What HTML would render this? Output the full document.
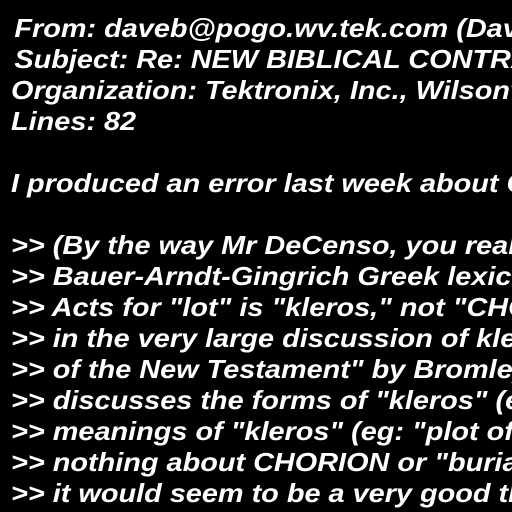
<!DOCTYPE html>
<html><head><style>
html,body{margin:0;padding:0;background:#000;width:512px;height:512px;overflow:hidden}
pre{margin:0;position:absolute;top:13px;left:11px;font-family:"Liberation Sans",sans-serif;font-weight:bold;font-style:italic;font-size:26px;line-height:31px;color:#fff;white-space:pre;transform:scaleX(1.11);transform-origin:0 0}
.i{padding-left:3px}
#w{position:absolute;left:0;top:0;width:512px;height:512px;overflow:hidden}
</style></head><body><div id="w">
<pre><span class="i">From: daveb@pogo.wv.tek.com (Dave</span>
<span class="i">Subject: Re: NEW BIBLICAL CONTRA</span>
Organization: Tektronix, Inc., Wilsonv
Lines: 82

I produced an error last week about CH

&gt;&gt; (By the way Mr DeCenso, you really
&gt;&gt; Bauer-Arndt-Gingrich Greek lexicon
&gt;&gt; Acts for "lot" is "kleros," not "CHOR
&gt;&gt; in the very large discussion of klero
&gt;&gt; of the New Testament" by Bromley
&gt;&gt; discusses the forms of "kleros" (eg
&gt;&gt; meanings of "kleros" (eg: "plot of
&gt;&gt; nothing about CHORION or "burial
&gt;&gt; it would seem to be a very good thing</pre>
</div></body></html>
